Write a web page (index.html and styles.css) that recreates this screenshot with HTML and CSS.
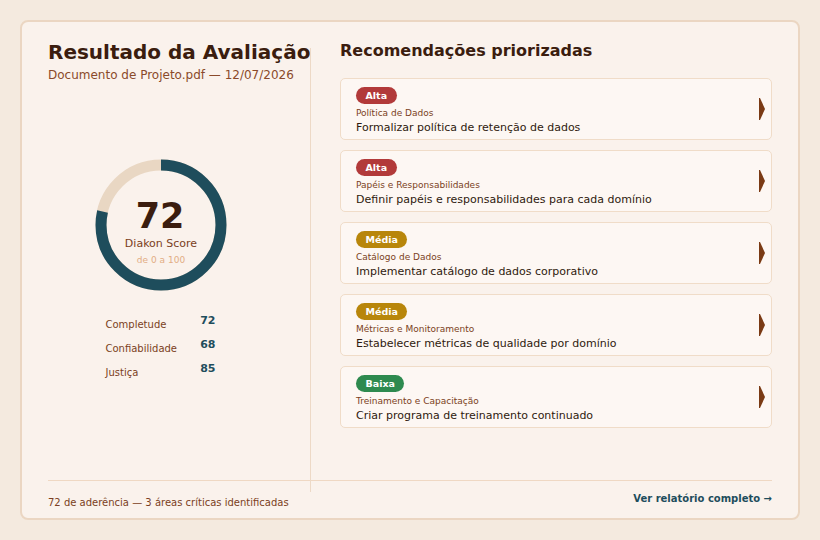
FILE: index.html
```html
<!DOCTYPE html>
<html lang="pt-BR">
<head>
<meta charset="utf-8">
<title>Resultado da Avaliação</title>
<link rel="stylesheet" href="styles.css">
</head>
<body>
<div class="card">
  <div class="main">
    <section class="summary">
      <h1 class="title">Resultado da Avaliação</h1>
      <p class="subtitle">Documento de Projeto.pdf — 12/07/2026</p>
      <div class="gauge">
        <svg width="140" height="140" viewBox="0 0 140 140">
          <circle class="ring-track" cx="70" cy="70" r="60"></circle>
          <circle class="ring-value" cx="70" cy="70" r="60" stroke-dasharray="296 377" transform="rotate(-90 70 70)"></circle>
          <text class="score" x="69" y="72.5" text-anchor="middle">72</text>
          <text class="score-label" x="70" y="91.5" text-anchor="middle">Diakon Score</text>
          <text class="score-range" x="70" y="107.5" text-anchor="middle">de 0 a 100</text>
        </svg>
      </div>
      <dl class="metrics">
        <div class="metric"><dt>Completude</dt><dd>72</dd></div>
        <div class="metric"><dt>Confiabilidade</dt><dd>68</dd></div>
        <div class="metric"><dt>Justiça</dt><dd>85</dd></div>
      </dl>
    </section>
    <section class="recs">
      <h2 class="recs-title">Recomendações priorizadas</h2>
      <ul class="rec-list">
        <li class="rec">
          <div class="rec-body">
            <span class="badge badge-high">Alta</span>
            <div class="rec-area">Política de Dados</div>
            <div class="rec-text">Formalizar política de retenção de dados</div>
          </div>
          <svg class="chev" width="6" height="22" viewBox="0 0 6 22"><polygon points="0,0 1,0 6,11 1,22 0,22"></polygon></svg>
        </li>
        <li class="rec">
          <div class="rec-body">
            <span class="badge badge-high">Alta</span>
            <div class="rec-area">Papéis e Responsabilidades</div>
            <div class="rec-text">Definir papéis e responsabilidades para cada domínio</div>
          </div>
          <svg class="chev" width="6" height="22" viewBox="0 0 6 22"><polygon points="0,0 1,0 6,11 1,22 0,22"></polygon></svg>
        </li>
        <li class="rec">
          <div class="rec-body">
            <span class="badge badge-mid">Média</span>
            <div class="rec-area">Catálogo de Dados</div>
            <div class="rec-text">Implementar catálogo de dados corporativo</div>
          </div>
          <svg class="chev" width="6" height="22" viewBox="0 0 6 22"><polygon points="0,0 1,0 6,11 1,22 0,22"></polygon></svg>
        </li>
        <li class="rec">
          <div class="rec-body">
            <span class="badge badge-mid">Média</span>
            <div class="rec-area">Métricas e Monitoramento</div>
            <div class="rec-text">Estabelecer métricas de qualidade por domínio</div>
          </div>
          <svg class="chev" width="6" height="22" viewBox="0 0 6 22"><polygon points="0,0 1,0 6,11 1,22 0,22"></polygon></svg>
        </li>
        <li class="rec">
          <div class="rec-body">
            <span class="badge badge-low">Baixa</span>
            <div class="rec-area">Treinamento e Capacitação</div>
            <div class="rec-text">Criar programa de treinamento continuado</div>
          </div>
          <svg class="chev" width="6" height="22" viewBox="0 0 6 22"><polygon points="0,0 1,0 6,11 1,22 0,22"></polygon></svg>
        </li>
      </ul>
    </section>
  </div>
  <footer class="foot">
    <span class="foot-note">72 de aderência — 3 áreas críticas identificadas</span>
    <a class="foot-link" href="#">Ver relatório completo →</a>
  </footer>
</div>
</body>
</html>
```

FILE: styles.css
```css
* {
  box-sizing: border-box;
}

body {
  margin: 0;
  padding: 20px;
  background: #f4eadf;
  font-family: "DejaVu Sans", "Noto Sans", sans-serif;
  color: #3b1d0f;
}

.card {
  width: 780px;
  height: 500px;
  display: flex;
  flex-direction: column;
  padding: 18px 26px 0;
  background: #faf2ec;
  border: 2px solid #ebd6c2;
  border-radius: 8px;
}

.main {
  flex: 1;
  display: grid;
  grid-template-columns: 263px 1fr;
  column-gap: 29px;
}

/* left column: title, score ring, metrics */
.summary {
  position: relative;
  padding-right: 38px;
}

.summary::after {
  content: "";
  position: absolute;
  top: 8px;
  bottom: -12px;
  right: 0;
  width: 1px;
  background: #edd9c6;
}

.title {
  margin: 0;
  font-size: 20px;
  line-height: 24px;
  font-weight: 700;
  color: #3b1d0f;
  white-space: nowrap;
}

.subtitle {
  margin: 3px 0 0;
  font-size: 12px;
  line-height: 16px;
  color: #8a4a2a;
  white-space: nowrap;
}

.gauge {
  margin-top: 72px;
  display: flex;
  justify-content: center;
}

.gauge svg {
  display: block;
}

.ring-track {
  fill: none;
  stroke: #e9d7c3;
  stroke-width: 11;
}

.ring-value {
  fill: none;
  stroke: #1e4d5c;
  stroke-width: 11;
}

.score {
  font-size: 35px;
  font-weight: 700;
  fill: #3b1d0f;
}

.score-label {
  font-size: 11px;
  fill: #7b3f22;
}

.score-range {
  font-size: 9px;
  fill: #e2ad84;
}

.metrics {
  width: 110px;
  margin: 19px auto 0;
}

.metric {
  display: flex;
  justify-content: space-between;
  height: 24px;
}

.metric dt {
  padding-top: 4px;
  font-size: 10px;
  line-height: 14px;
  color: #7b3f22;
}

.metric dd {
  margin: 0;
  font-size: 11px;
  line-height: 14px;
  font-weight: 700;
  color: #1e4d5c;
}

/* right column: prioritised recommendations */
.recs-title {
  margin: 0 0 16px;
  font-size: 16px;
  line-height: 22px;
  font-weight: 700;
  color: #3b1d0f;
}

.rec-list {
  list-style: none;
  margin: 0;
  padding: 0;
  display: flex;
  flex-direction: column;
  gap: 10px;
}

.rec {
  display: flex;
  align-items: center;
  height: 62px;
  padding: 8px 6px 5px 15px;
  background: #fdf7f3;
  border: 1px solid #f0dcc8;
  border-radius: 5px;
}

.rec-body {
  flex: 1;
  align-self: flex-start;
}

.badge {
  display: inline-block;
  height: 17px;
  padding: 2px 9.5px;
  border-radius: 9px;
  font-size: 9.5px;
  line-height: 13px;
  font-weight: 700;
  color: #fff;
  vertical-align: top;
}

.badge-high {
  background: #b23a3a;
}

.badge-mid {
  background: #b8860b;
}

.badge-low {
  background: #2e8a4f;
}

.rec-area {
  margin-top: 1px;
  font-size: 9px;
  line-height: 12px;
  color: #7b3f22;
}

.rec-text {
  margin-top: 2px;
  font-size: 11px;
  line-height: 14px;
  color: #2f1a0e;
}

.chev {
  display: block;
  margin-top: -3px;
  fill: #7a3a14;
}

/* footer strip */
.foot {
  display: flex;
  justify-content: space-between;
  align-items: flex-start;
  height: 38px;
  padding-top: 11px;
  border-top: 1px solid #efd8c3;
}

.foot-note {
  margin-top: 4px;
  font-size: 10px;
  line-height: 14px;
  color: #7b3f22;
}

.foot-link {
  font-size: 10px;
  line-height: 14px;
  font-weight: 700;
  color: #1e4d5c;
  text-decoration: none;
}
```
